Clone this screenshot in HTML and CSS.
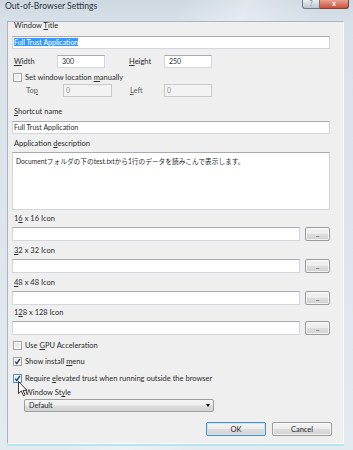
FILE: index.html
```html
<!DOCTYPE html>
<html lang="en">
<head>
    <meta charset="UTF-8">
    <meta name="viewport" content="width=device-width, initial-scale=1.0">
    <title>Out-of-Browser Settings</title>
    <link rel="stylesheet" href="styles.css">
</head>
<body>
    <div class="window">
        <div class="titlebar">
            <span class="title">Out-of-Browser Settings</span>
            <div class="caption">
                <span class="cap-btn help">?</span>
                <span class="cap-btn close">x</span>
            </div>
        </div>

        <div class="client">
            <div class="label lbl-title">Window <u>T</u>itle</div>
            <div class="field field-title"><span class="sel">Full Trust Application</span></div>

            <div class="size-row">
                <span class="size-lbl w-a"><u>W</u>idth</span>
                <div class="field num">300</div>
                <span class="size-lbl w-b"><u>H</u>eight</span>
                <div class="field num">250</div>
            </div>

            <div class="check-row row-location">
                <span class="check"></span>
                <span>Set window location <u>m</u>anually</span>
            </div>

            <div class="size-row pos-row">
                <span class="size-lbl w-c">To<u>p</u></span>
                <div class="field num disabled">0</div>
                <span class="size-lbl w-d"><u>L</u>eft</span>
                <div class="field num disabled">0</div>
            </div>

            <div class="label lbl-shortcut"><u>S</u>hortcut name</div>
            <div class="field field-shortcut">Full Trust Application</div>

            <div class="label lbl-desc">Application <u>d</u>escription</div>
            <div class="field textarea">Documentフォルダの下のtest.txtから1行のデータを読みこんで表示します。</div>

            <div class="label lbl-icon first">1<u>6</u> x 16 Icon</div>
            <div class="icon-row">
                <div class="field"></div>
                <button class="browse">...</button>
            </div>

            <div class="label lbl-icon"><u>3</u>2 x 32 Icon</div>
            <div class="icon-row">
                <div class="field"></div>
                <button class="browse">...</button>
            </div>

            <div class="label lbl-icon"><u>4</u>8 x 48 Icon</div>
            <div class="icon-row">
                <div class="field"></div>
                <button class="browse">...</button>
            </div>

            <div class="label lbl-icon last">1<u>2</u>8 x 128 Icon</div>
            <div class="icon-row">
                <div class="field"></div>
                <button class="browse">...</button>
            </div>

            <div class="check-row row-gpu">
                <span class="check"></span>
                <span>Use <u>G</u>PU Acceleration</span>
            </div>

            <div class="check-row row-menu">
                <span class="check checked">
                    <svg viewBox="0 0 9 9" width="9" height="9"><path d="M2.2 4.6 L3.8 6.6 L6.9 1.9" fill="none" stroke="#1d3a6e" stroke-width="1.4"/></svg>
                </span>
                <span>Show install <u>m</u>enu</span>
            </div>

            <div class="check-row row-trust">
                <span class="check checked hover">
                    <svg viewBox="0 0 9 9" width="9" height="9"><path d="M2.2 4.6 L3.8 6.6 L6.9 1.9" fill="none" stroke="#1d3a6e" stroke-width="1.4"/></svg>
                </span>
                <span>Require <u>e</u>levated trust when running outside the browser</span>
            </div>

            <div class="style-group">
                <div class="label">Window St<u>y</u>le</div>
                <div class="combo">
                    <span>Default</span>
                    <span class="arrow"></span>
                </div>
            </div>

            <div class="actions">
                <button class="btn default">OK</button>
                <button class="btn">Cancel</button>
            </div>
        </div>

        <!-- mouse pointer resting on the checkbox -->
        <svg class="cursor" viewBox="0 0 10 16" width="10" height="16">
            <path d="M0.5 0.5 L0.5 12.5 L3.3 9.9 L5.4 14.6 L7 13.9 L5 9.3 L8.8 9.3 Z" fill="#fff" stroke="#222" stroke-width="0.9"/>
        </svg>
    </div>
</body>
</html>
```

FILE: styles.css
```css
/* Window frame */
body {
    margin: 0;
    font-family: Lato, "Noto Sans", "Noto Sans CJK JP", sans-serif;
    font-size: 7.5px;
    color: #2b2b2b;
}

.window {
    position: relative;
    width: 353px;
    height: 450px;
    display: flex;
    flex-direction: column;
    overflow: hidden;
    background:
        linear-gradient(105deg, rgba(255, 255, 255, 0) 38%, rgba(255, 255, 255, 0.35) 52%, rgba(255, 255, 255, 0) 68%),
        linear-gradient(180deg, #cdd7e0 0, #d8e1e9 21px, #e3eaf0 100%);
}

.titlebar {
    height: 21px;
    flex-shrink: 0;
    display: flex;
    justify-content: space-between;
    align-items: flex-start;
}

.title {
    margin: 1px 0 0 5px;
    font-size: 8.6px;
    line-height: 10px;
    color: #2a333c;
}

.caption {
    display: flex;
    margin-right: 4px;
}

.cap-btn {
    height: 8px;
    font-size: 7px;
    line-height: 7px;
    text-align: center;
    color: #fff;
    border: 1px solid #6d7a86;
    border-top: none;
}

.help {
    width: 16px;
    background: linear-gradient(180deg, #e9eef2, #bcc6cf);
    color: #6f7f8c;
    border-radius: 0 0 0 3px;
}

.close {
    width: 28px;
    border-left: none;
    background: linear-gradient(180deg, #e8a394, #c9503b);
    border-color: #8a3b2f;
    border-radius: 0 0 3px 0;
    font-weight: bold;
}

/* Client area */
.client {
    flex: 1;
    margin: 0 9px 6px 7px;
    padding: 0 13px 0 4px;
    background: #efefef;
    border: 1px solid #a9b5c0;
    border-right-color: #fbfbfb;
    border-bottom-color: #fbfbfb;
    box-shadow: 0 2px 0 #b7e5ef;
    display: flex;
    flex-direction: column;
}

.label {
    height: 10px;
    line-height: 10px;
    padding-left: 2px;
    white-space: nowrap;
}

.lbl-title { margin-top: -1px; }
.lbl-shortcut { margin-top: 10px; }
.lbl-desc { margin-top: 5px; }
.lbl-icon { margin-top: 5px; }
.lbl-icon.first { margin-top: 4px; }
.lbl-icon.last { margin-top: 3px; }

.field {
    box-sizing: border-box;
    height: 13px;
    background: #fff;
    border: 1px solid #d3d6da;
    border-top-color: #a9abb0;
    font-size: 7px;
    line-height: 11px;
    padding-left: 1px;
    white-space: nowrap;
    overflow: hidden;
}

.field-title { margin-top: 5px; }
.field-shortcut { margin-top: 4px; }

.sel {
    background: #3399ff;
    color: #fff;
}

.num { padding-left: 4px; }

.disabled {
    background: #f3f3f3;
    border-color: #c9c9c9;
    color: #8c8c8c;
    padding-left: 2px;
}

.textarea {
    height: 58px;
    margin-top: 3px;
    padding: 3px 0 0 3px;
    font-size: 6.7px;
    white-space: normal;
}

/* Size / position rows */
.size-row {
    display: flex;
    align-items: center;
    height: 13px;
    margin-top: 6px;
    padding-left: 2px;
}

.size-row .field { width: 48px; }
.size-lbl { line-height: 10px; }
.w-a { width: 43px; }
.w-b { width: 35px; margin-left: 24px; }

.pos-row {
    margin-top: 2px;
    padding-left: 14px;
}

.pos-row .size-lbl { color: #5e5e5e; }
.w-c { width: 37px; }
.pos-row .field:nth-child(2) { width: 49px; }
.w-d { width: 34px; margin-left: 18px; }

/* Checkboxes */
.check-row {
    display: flex;
    align-items: center;
    gap: 3px;
    height: 9px;
    line-height: 9px;
    padding-left: 1px;
    white-space: nowrap;
}

.row-location { margin-top: 5px; }
.row-gpu { margin-top: 6px; }
.row-menu { margin-top: 7px; }
.row-trust { margin-top: 8px; }

.check {
    box-sizing: border-box;
    width: 9px;
    height: 9px;
    flex-shrink: 0;
    border: 1px solid #a3a3a3;
    background: linear-gradient(135deg, #e2e2e2, #f8f8f8);
    box-shadow: inset 0 0 0 1px #fff;
    display: flex;
}

.check svg {
    margin: -1px;
}

.check.hover {
    border-color: #4f8fc4;
    background: linear-gradient(135deg, #c9e7f8, #eef8fe);
}

/* Icon rows */
.icon-row {
    display: flex;
    gap: 5px;
    height: 14px;
    margin-top: 3px;
}

.icon-row .field {
    flex: 1;
    height: 14px;
}

button {
    box-sizing: border-box;
    font-family: inherit;
    font-size: 7.5px;
    color: #2b2b2b;
    border: 1px solid #9b9b9b;
    border-radius: 2px;
    background: linear-gradient(180deg, #f4f4f4 0, #ececec 48%, #dddddd 52%, #d2d2d2 100%);
    box-shadow: inset 0 0 0 1px rgba(255, 255, 255, 0.7);
}

.browse {
    width: 25px;
    height: 14px;
    padding: 0;
    font-size: 7px;
    line-height: 8px;
    color: #555;
    letter-spacing: -0.5px;
}

/* Window style */
.style-group {
    margin-top: 5px;
    padding-left: 12px;
}

.style-group .label {
    padding-left: 1px;
}

.combo {
    box-sizing: border-box;
    width: 190px;
    height: 13px;
    margin-top: 1px;
    display: flex;
    justify-content: space-between;
    align-items: center;
    padding: 0 3px 0 4px;
    border: 1px solid #9f9f9f;
    border-radius: 2px;
    background: linear-gradient(180deg, #f4f4f4 0, #ececec 48%, #dddddd 52%, #d2d2d2 100%);
    font-size: 7.2px;
}

.arrow {
    width: 0;
    height: 0;
    border-left: 2.5px solid transparent;
    border-right: 2.5px solid transparent;
    border-top: 3px solid #111;
}

/* Dialog buttons */
.actions {
    display: flex;
    justify-content: flex-end;
    gap: 6px;
    margin: 10px -2px 0 0;
}

.btn {
    width: 60px;
    height: 14px;
    padding: 0;
    line-height: 11px;
}

.btn.default {
    border-color: #4f8dbd;
    box-shadow: inset 0 0 0 1px #c9e6f6;
}

.cursor {
    position: absolute;
    left: 18px;
    top: 381px;
}
```
